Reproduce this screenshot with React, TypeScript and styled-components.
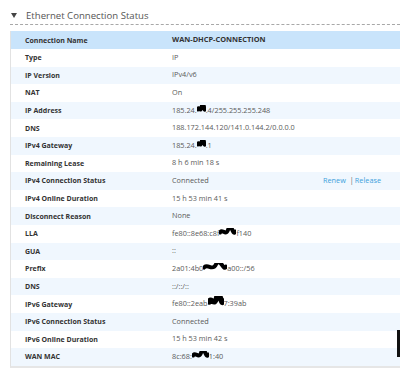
import React from 'react';
import styled, { createGlobalStyle } from 'styled-components';

const GlobalStyle = createGlobalStyle`
  html, body {
    margin: 0;
    padding: 0;
    background: #fff;
    overflow: hidden;
  }
  body {
    font-family: "Open Sans", "Noto Sans", sans-serif;
  }
`

const Page = styled.div`
  width: 400px;
  height: 378px;
  position: relative;
  overflow: hidden;
`

const SectionHeader = styled.div`
  display: flex;
  align-items: center;
  height: 25px;
  margin-left: 10px;
  padding-top: 6px;
  border-bottom: 1px dashed #a8a8a8;
  box-sizing: border-box;
`

const Caret = styled.span`
  width: 0;
  height: 0;
  border-left: 3px solid transparent;
  border-right: 3px solid transparent;
  border-top: 5px solid #444;
  margin-left: 1px;
  margin-right: 9px;
  margin-top: 1px;
`

const Title = styled.h3`
  margin: 0;
  font-size: 9.6px;
  font-weight: 400;
  color: #555;
`

const Table = styled.div`
  margin: 6px 0 0 10px;
  width: 400px;
  border-left: 1px solid #e2e2e2;
  border-bottom: 2px solid #e6e6e6;
`

const Row = styled.div<{ $tone: 'head' | 'even' | 'odd' }>`
  display: grid;
  grid-template-columns: 147px 147px 1fr;
  align-items: center;
  height: ${p => (p.$tone === 'head' ? '18px' : '17.6px')};
  padding-left: 14px;
  background: ${p => (p.$tone === 'head' ? '#c9e4fb' : p.$tone === 'odd' ? '#f0f7fe' : '#fff')};
`

const Label = styled.span`
  font-size: 7px;
  font-weight: 700;
  color: #333;
  white-space: nowrap;
`

const Value = styled.span<{ $strong?: boolean }>`
  font-size: ${p => (p.$strong ? '7.4px' : '7.3px')};
  font-weight: ${p => (p.$strong ? 700 : 400)};
  color: ${p => (p.$strong ? '#333' : '#5a5a5a')};
  white-space: nowrap;
  line-height: 10px;
  padding-bottom: 2px;
`

const Actions = styled.span`
  font-size: 7.3px;
  color: #3b9fdc;
  white-space: nowrap;
  padding-left: 4px;
  padding-bottom: 2px;
`

const Sep = styled.span`
  color: #666;
  margin: 0 1px 0 4px;
`

const Blob = styled.svg`
  display: inline-block;
  vertical-align: middle;
  margin-top: -3px;
`

const ScrollThumb = styled.div`
  position: absolute;
  right: 0;
  top: 330px;
  width: 3px;
  height: 27px;
  background: #111;
`

const Redact = ({ w, h = 9 }: { w: number; h?: number }) => (
  <Blob width={w} height={h} viewBox={`0 0 ${w} ${h}`}>
    <path
      d={`M1 ${h / 2} C ${w * 0.2} 0, ${w * 0.4} ${h}, ${w * 0.55} 1 S ${w * 0.85} ${h}, ${w - 1} ${h / 2 - 1}`}
      stroke="#000"
      strokeWidth={h * 0.45}
      fill="none"
      strokeLinecap="round"
    />
  </Blob>
)

type Item = { label: string; value: React.ReactNode; actions?: boolean }

const items: Item[] = [
  { label: 'Type', value: 'IP' },
  { label: 'IP Version', value: 'IPv4/v6' },
  { label: 'NAT', value: 'On' },
  { label: 'IP Address', value: <>185.24.<Redact w={9} />.4/255.255.255.248</> },
  { label: 'DNS', value: '188.172.144.120/141.0.144.2/0.0.0.0' },
  { label: 'IPv4 Gateway', value: <>185.24.<Redact w={9} />.1</> },
  { label: 'Remaining Lease', value: '8 h 6 min 18 s' },
  { label: 'IPv4 Connection Status', value: 'Connected', actions: true },
  { label: 'IPv4 Online Duration', value: '15 h 53 min 41 s' },
  { label: 'Disconnect Reason', value: 'None' },
  { label: 'LLA', value: <>fe80::8e68:c8f<Redact w={17} />f140</> },
  { label: 'GUA', value: '::' },
  { label: 'Prefix', value: <>2a01:4b0<Redact w={24} />a00::/56</> },
  { label: 'DNS', value: '::/::/::' },
  { label: 'IPv6 Gateway', value: <>fe80::2eab<Redact w={16} h={12} />7:39ab</> },
  { label: 'IPv6 Connection Status', value: 'Connected' },
  { label: 'IPv6 Online Duration', value: '15 h 53 min 42 s' },
  { label: 'WAN MAC', value: <>8c:68:<Redact w={17} />1:40</> },
]

const App = () => {
  return (
    <Page>
      <GlobalStyle />
      <SectionHeader>
        <Caret />
        <Title>Ethernet Connection Status</Title>
      </SectionHeader>
      <Table>
        <Row $tone="head">
          <Label>Connection Name</Label>
          <Value $strong>WAN-DHCP-CONNECTION</Value>
          <span />
        </Row>
        {items.map((it, i) => (
          <Row key={i} $tone={i % 2 === 0 ? 'even' : 'odd'}>
            <Label>{it.label}</Label>
            <Value>{it.value}</Value>
            {it.actions ? (
              <Actions>Renew<Sep>|</Sep>Release</Actions>
            ) : <span />}
          </Row>
        ))}
      </Table>
      <ScrollThumb />
    </Page>
  )
}

export default App;
